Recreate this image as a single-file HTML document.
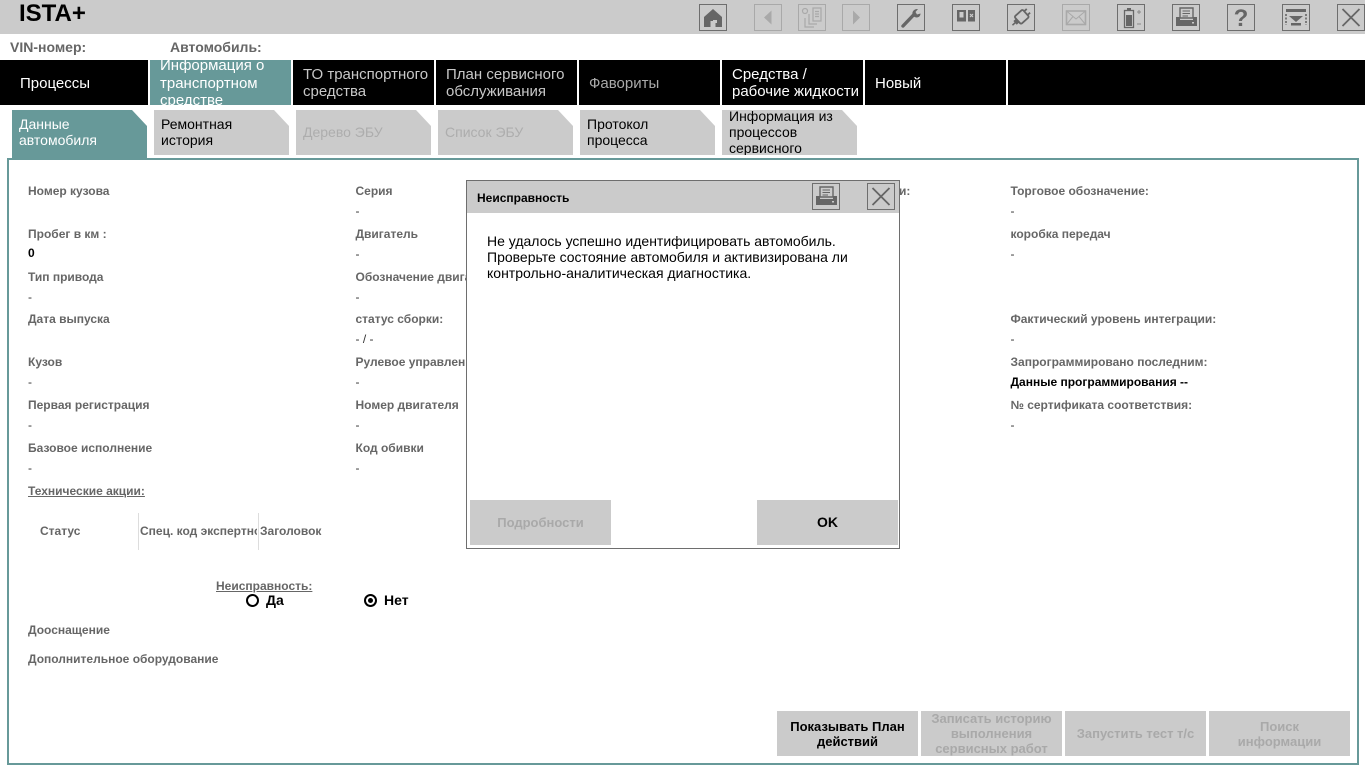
<!DOCTYPE html>
<html lang="ru"><head><meta charset="utf-8"><title>ISTA+</title>
<style>
html,body{margin:0;padding:0;background:#fff}
body{width:1365px;height:767px;overflow:hidden;position:relative;font-family:"Liberation Sans",Arial,sans-serif}
div,span.a{position:absolute}
.ib{width:26px;height:25px;top:4px;border:1.3px solid #6e6e6e}
.ib.d{border-color:#a9a9a9}
.ib svg{position:absolute;left:0;top:0;width:26px;height:25px}
.n{top:60px;height:45px;background:#000;color:#fff;font-size:15px;line-height:17px;overflow:hidden;width:131px;padding-left:10px}
.n span{position:absolute;left:10px;white-space:nowrap}
.t{top:110px;height:45px;width:135px;background:#cbcbcb;clip-path:polygon(0 0,120px 0,135px 16px,135px 100%,0 100%);font-size:14px;line-height:16px;color:#000;overflow:hidden}
.t span{position:absolute;left:7px;white-space:nowrap}
.l{font-size:12px;font-weight:bold;color:#666;line-height:14px;white-space:nowrap}
.v{font-size:12px;color:#333;line-height:14px;white-space:nowrap;margin-top:-1px}
.b{background:#cbcbcb;width:141px;height:45px;font-size:13px;font-weight:bold;text-align:center;line-height:15px;color:#000;display:flex;align-items:center;justify-content:center;overflow:hidden}
.b.d{color:#a9a9a9}
</style></head><body>
<div style="left:0;top:0;width:1365px;height:34px;background:#cbcbcb"></div>
<div style="left:19px;top:0;font-size:24px;font-weight:bold;line-height:28px;color:#000">ISTA+</div>

<div class="ib" style="left:699px"><svg viewBox="0 0 26 25"><path d="M13 4L4 12V22H10.5V16H15.5V22H22V12Z" fill="#666"/><rect x="13" y="15" width="4" height="3" fill="#cbcbcb"/></svg></div>
<div class="ib d" style="left:754px"><svg viewBox="0 0 26 25"><path d="M16.5 5.5V19.5L9 12.5Z" fill="#a9a9a9"/></svg></div>
<div class="ib d" style="left:798px"><svg viewBox="0 0 26 25" fill="none" stroke="#a9a9a9" stroke-width="1.2"><circle cx="6" cy="6" r="2.5"/><path d="M6 13V22H15M10 9V19H18"/><path d="M14 3H22V16H14Z" fill="#cbcbcb"/><path d="M16 6.5H20M16 9H20M16 11.5H20"/></svg></div>
<div class="ib d" style="left:842px"><svg viewBox="0 0 26 25"><path d="M10 5.5V19.5L17 12.5Z" fill="#a9a9a9"/></svg></div>
<div class="ib" style="left:897px"><svg viewBox="0 0 26 25"><path d="M5 21L15 10.5" stroke="#666" stroke-width="3.4" stroke-linecap="round"/><path d="M15 11C13 7 16 3.5 20 4L17.5 7L19 9.5L22.5 8.5C22.5 12 19 14 15 11Z" fill="#666"/></svg></div>
<div class="ib" style="left:952px"><svg viewBox="0 0 26 25"><rect x="4" y="5" width="9" height="11.5" fill="#666"/><rect x="6.5" y="7" width="4" height="5.5" fill="#cbcbcb"/><rect x="15" y="5" width="7" height="11.5" fill="#666"/><path d="M17 9L20 12M20 9L17 12" stroke="#cbcbcb" stroke-width="1.2"/></svg></div>
<div class="ib" style="left:1007px"><svg viewBox="0 0 26 25" fill="none" stroke="#666"><g transform="rotate(48 13 12.5)"><rect x="8" y="6" width="10" height="11" rx="1.5" stroke-width="1.8"/><path d="M10.5 6V2.5M15.5 6V2.5" stroke-width="1.8"/><path d="M11 17H15V20H11Z" fill="#666" stroke-width="1"/><path d="M13 20V24" stroke-width="1.6"/></g></svg></div>
<div class="ib d" style="left:1062px"><svg viewBox="0 0 26 25" fill="none" stroke="#a9a9a9" stroke-width="1.6"><rect x="3.5" y="6" width="19" height="13.5"/><path d="M3.5 6L13 14L22.5 6M3.5 19.5L10 11.5M22.5 19.5L16 11.5" stroke-width="1"/></svg></div>
<div class="ib" style="left:1117px"><svg viewBox="0 0 26 25"><rect x="9" y="3" width="4" height="3" fill="#666"/><rect x="6.5" y="5.5" width="9" height="17" fill="none" stroke="#666" stroke-width="1.3"/><rect x="8" y="10" width="6" height="11" fill="#666"/><path d="M19 7H23M21 5V9M19 19H23" stroke="#888" stroke-width="1"/></svg></div>
<div class="ib" style="left:1172px"><svg viewBox="0 0 26 25"><path d="M7 3H20V13H7Z" fill="#cbcbcb" stroke="#666" stroke-width="1.4"/><path d="M9.5 6H17M9.5 8.5H17M9.5 11H15" stroke="#666"/><path d="M3 12H7V15H20V12H24V21H3Z" fill="#666"/><rect x="19" y="17" width="2" height="1.5" fill="#cbcbcb"/></svg></div>
<div class="ib" style="left:1227px"><svg viewBox="0 0 26 25"><text x="13" y="21" font-family="Liberation Sans" font-size="24" font-weight="bold" fill="#666" text-anchor="middle">?</text></svg></div>
<div class="ib" style="left:1282px"><svg viewBox="0 0 26 25"><rect x="3" y="4" width="20" height="3" fill="#666"/><path d="M3 9V20M23 9V20" stroke="#666" stroke-width="1.6" stroke-dasharray="2 1.5"/><path d="M6 11H20L13 17Z" fill="#666"/><rect x="8" y="18" width="10" height="2.5" fill="#666"/></svg></div>
<div class="ib" style="left:1337px"><svg viewBox="0 0 26 25"><path d="M4.5 4L21.5 21M21.5 4L4.5 21" stroke="#666" stroke-width="1.8"/></svg></div>

<div class="l" style="left:10px;top:40px;font-size:14px">VIN-номер:</div>
<div class="l" style="left:170px;top:40px;font-size:14px">Автомобиль:</div>

<div class="n" style="left:0;width:138px"><span style="left:20px;top:14.5px">Процессы</span></div>
<div class="n" style="left:150px;background:#679999"><span style="top:-3px;line-height:17.5px">Информация о<br>транспортном<br>средстве</span></div>
<div class="n" style="left:293px;color:#c8c8c8"><span style="top:6px">ТО транспортного<br>средства</span></div>
<div class="n" style="left:436px;color:#c8c8c8"><span style="top:6px">План сервисного<br>обслуживания</span></div>
<div class="n" style="left:579px;color:#aaa"><span style="top:14.5px">Фавориты</span></div>
<div class="n" style="left:722px"><span style="top:6px">Средства /<br>рабочие жидкости</span></div>
<div class="n" style="left:865px"><span style="top:14.5px">Новый</span></div>
<div class="n" style="left:1008px;width:347px"></div>

<div class="t" style="left:12px;height:49px;background:#679999;color:#fff"><span style="top:6px">Данные<br>автомобиля</span></div>
<div class="t" style="left:154px"><span style="top:6px">Ремонтная<br>история</span></div>
<div class="t" style="left:296px;color:#adadad"><span style="top:14px">Дерево ЭБУ</span></div>
<div class="t" style="left:438px;color:#adadad"><span style="top:14px">Список ЭБУ</span></div>
<div class="t" style="left:580px"><span style="top:6px">Протокол<br>процесса</span></div>
<div class="t" style="left:722px"><span style="top:-2px">Информация из<br>процессов<br>сервисного</span></div>

<div style="left:7px;top:158px;width:1348px;height:603px;border:2px solid #679999"></div>

<div class="l" style="left:28px;top:184px">Номер кузова</div>
<div class="l" style="left:28px;top:227px">Пробег в км :</div>
<div class="v" style="left:28px;top:247px;font-weight:bold;color:#000">0</div>
<div class="l" style="left:28px;top:270px">Тип привода</div>
<div class="v" style="left:28px;top:291px">-</div>
<div class="l" style="left:28px;top:312px">Дата выпуска</div>
<div class="l" style="left:28px;top:355px">Кузов</div>
<div class="v" style="left:28px;top:376px">-</div>
<div class="l" style="left:28px;top:398px">Первая регистрация</div>
<div class="v" style="left:28px;top:419px">-</div>
<div class="l" style="left:28px;top:441px">Базовое исполнение</div>
<div class="v" style="left:28px;top:462px">-</div>
<div class="l" style="left:28px;top:484px;text-decoration:underline">Технические акции:</div>

<div class="l" style="left:355.5px;top:184px">Серия</div>
<div class="v" style="left:355.5px;top:205px">-</div>
<div class="l" style="left:355.5px;top:227px">Двигатель</div>
<div class="v" style="left:355.5px;top:248px">-</div>
<div class="l" style="left:355.5px;top:270px">Обозначение двигателя</div>
<div class="v" style="left:355.5px;top:291px">-</div>
<div class="l" style="left:355.5px;top:312px">статус сборки:</div>
<div class="v" style="left:355.5px;top:333px">- / -</div>
<div class="l" style="left:355.5px;top:355px">Рулевое управление</div>
<div class="v" style="left:355.5px;top:376px">-</div>
<div class="l" style="left:355.5px;top:398px">Номер двигателя</div>
<div class="v" style="left:355.5px;top:419px">-</div>
<div class="l" style="left:355.5px;top:441px">Код обивки</div>
<div class="v" style="left:355.5px;top:462px">-</div>

<div class="l" style="left:1010.5px;top:184px">Торговое обозначение:</div>
<div class="v" style="left:1010.5px;top:205px">-</div>
<div class="l" style="left:1010.5px;top:227px">коробка передач</div>
<div class="v" style="left:1010.5px;top:248px">-</div>
<div class="l" style="left:1010.5px;top:312px">Фактический уровень интеграции:</div>
<div class="v" style="left:1010.5px;top:333px">-</div>
<div class="l" style="left:1010.5px;top:355px">Запрограммировано последним:</div>
<div class="v" style="left:1010.5px;top:376px;font-weight:bold;color:#000">Данные программирования --</div>
<div class="l" style="left:1010.5px;top:398px">№ сертификата соответствия:</div>
<div class="v" style="left:1010.5px;top:419px">-</div>
<div class="l" style="left:899px;top:184px">и:</div>

<div class="l" style="left:40px;top:524px">Статус</div>
<div style="left:138px;top:513px;width:1px;height:37px;background:#ddd"></div>
<div class="l" style="left:140px;top:524px;width:117px;overflow:hidden">Спец. код экспертной</div>
<div style="left:258px;top:513px;width:1px;height:37px;background:#ddd"></div>
<div class="l" style="left:260px;top:524px">Заголовок</div>

<div class="l" style="left:216px;top:579px;text-decoration:underline">Неисправность:</div>
<div style="left:246px;top:594px;width:9px;height:9px;border:2px solid #000;border-radius:50%"></div>
<div class="l" style="left:266px;top:593px;color:#000;font-size:14px">Да</div>
<div style="left:364px;top:594px;width:9px;height:9px;border:2px solid #000;border-radius:50%"></div>
<div style="left:368px;top:598px;width:5px;height:5px;background:#000;border-radius:50%"></div>
<div class="l" style="left:384px;top:593px;color:#000;font-size:14px">Нет</div>

<div class="l" style="left:28px;top:623px">Дооснащение</div>
<div class="l" style="left:28px;top:652px">Дополнительное оборудование</div>

<div class="b" style="left:777px;top:711px;color:#000">Показывать План<br>действий</div>
<div class="b d" style="left:921px;top:711px">Записать историю<br>выполнения<br>сервисных работ</div>
<div class="b d" style="left:1065px;top:711px">Запустить тест т/с</div>
<div class="b d" style="left:1209px;top:711px">Поиск<br>информации</div>

<div style="left:466px;top:180px;width:432px;height:367px;background:#fff;border:1px solid #6e6e6e"></div>
<div style="left:467px;top:181px;width:432px;height:32px;background:#cbcbcb"></div>
<div class="l" style="left:477px;top:191px;color:#000">Неисправность</div>
<div class="ib" style="left:812px;top:183px"><svg viewBox="0 0 26 25"><path d="M7 3H20V13H7Z" fill="#cbcbcb" stroke="#666" stroke-width="1.4"/><path d="M9.5 6H17M9.5 8.5H17M9.5 11H15" stroke="#666"/><path d="M3 12H7V15H20V12H24V21H3Z" fill="#666"/><rect x="19" y="17" width="2" height="1.5" fill="#cbcbcb"/></svg></div>
<div class="ib" style="left:867px;top:183px"><svg viewBox="0 0 26 25"><path d="M4.5 4L21.5 21M21.5 4L4.5 21" stroke="#666" stroke-width="1.8"/></svg></div>
<div style="left:487px;top:233px;font-size:14px;line-height:16px;color:#000;white-space:nowrap">Не удалось успешно идентифицировать автомобиль.<br>Проверьте состояние автомобиля и активизирована ли<br>контрольно-аналитическая диагностика.</div>
<div class="b d" style="left:470px;top:500px">Подробности</div>
<div class="b" style="left:757px;top:500px;font-size:14px">OK</div>
</body></html>
